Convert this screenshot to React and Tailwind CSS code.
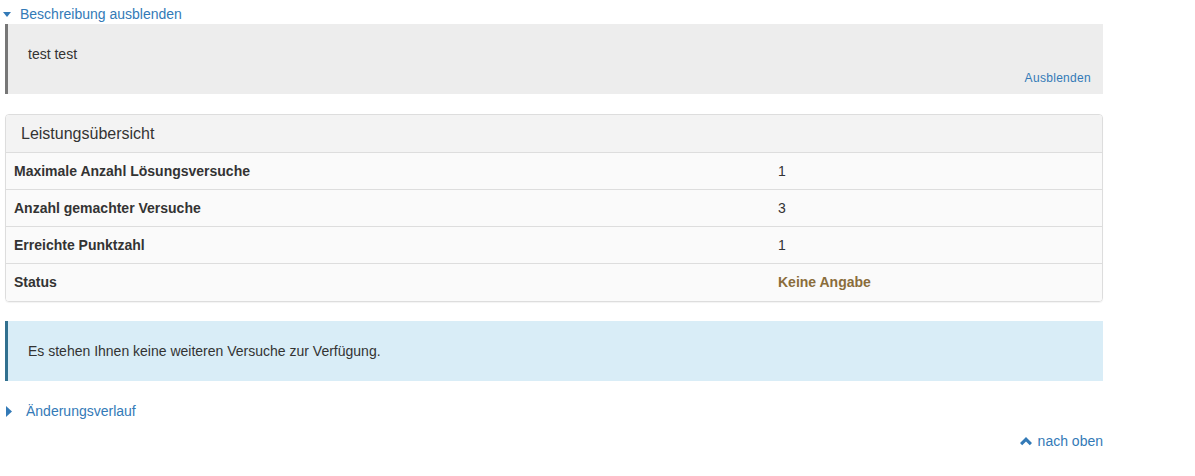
import React from 'react';

const rows = [
  { label: 'Maximale Anzahl Lösungsversuche', value: '1' },
  { label: 'Anzahl gemachter Versuche', value: '3' },
  { label: 'Erreichte Punktzahl', value: '1' },
  { label: 'Status', value: 'Keine Angabe', status: true },
];

const CaretDown = () => (
  <svg width="8" height="5" viewBox="0 0 8 5" className="fill-[#337ab7]">
    <path d="M0 0h8L4 5z" />
  </svg>
);

const CaretRight = () => (
  <svg width="6" height="11" viewBox="0 0 6 11" className="fill-[#337ab7]">
    <path d="M0 0l6 5.5L0 11z" />
  </svg>
);

const ChevronUp = () => (
  <svg width="12" height="9" viewBox="0 0 12 9" className="fill-[#337ab7]">
    <path d="M6 0l6 6-2.2 2.2L6 4.4 2.2 8.2 0 6z" />
  </svg>
);

export default function App() {
  return (
    <div className="w-[1195px] h-[476px] bg-white text-[14px] text-[#333] font-['Liberation_Sans',Arial,sans-serif] pl-[5px] pr-[92px]">
      <a className="flex items-center h-[24px] pt-[4px] -ml-[2px] text-[#337ab7] gap-[9px]">
        <CaretDown />
        <span>Beschreibung ausblenden</span>
      </a>

      <div className="bg-[#ededed] border-l-[3px] border-[#777] h-[70px] pl-[20px] pr-[12px] pt-[20px] relative">
        <p>test test</p>
        <a className="absolute right-[12px] bottom-[7px] text-[12px] text-[#337ab7] tracking-[0.3px]">Ausblenden</a>
      </div>

      <div className="mt-[20px] border border-[#ddd] rounded-[4px] shadow-[0_1px_1px_rgba(0,0,0,0.05)] overflow-hidden">
        <div className="bg-[#f3f3f3] h-[38px] flex items-center pl-[15px] text-[16px] text-[#333] border-b border-[#ddd]">
          Leistungsübersicht
        </div>
        {rows.map((r, i) => (
          <div
            key={r.label}
            className={`flex items-center h-[37px] bg-[#fafafa] ${i < rows.length - 1 ? 'border-b border-[#ddd]' : ''}`}
          >
            <div className="w-[772px] pl-[8px] font-bold">{r.label}</div>
            <div className={r.status ? 'font-bold text-[#8a6d3b]' : ''}>{r.value}</div>
          </div>
        ))}
      </div>

      <div className="mt-[19px] bg-[#d9edf7] border-l-[3px] border-[#31708f] h-[60px] flex items-center pl-[20px] pt-[1px]">
        Es stehen Ihnen keine weiteren Versuche zur Verfügung.
      </div>

      <a className="flex items-center gap-[14px] mt-[20px] ml-[1px] h-[20px] text-[#337ab7]">
        <CaretRight />
        <span>Änderungsverlauf</span>
      </a>

      <div className="flex justify-end mt-[10px]">
        <a className="flex items-center gap-[6px] text-[#337ab7]">
          <ChevronUp />
          <span>nach oben</span>
        </a>
      </div>
    </div>
  );
}
